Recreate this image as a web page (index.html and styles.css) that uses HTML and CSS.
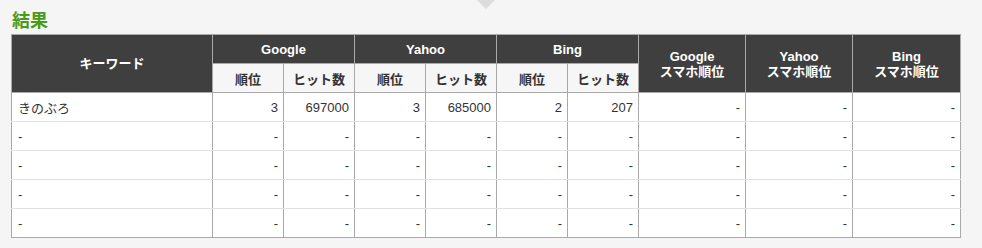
FILE: index.html
```html
<!DOCTYPE html>
<html lang="ja">
<head>
<meta charset="utf-8">
<link rel="stylesheet" href="styles.css">
</head>
<body>
<div class="page">
  <div class="notch"></div>
  <h2 class="title">結果</h2>
  <table class="result">
    <colgroup>
      <col class="c-kw">
      <col class="c-s"><col class="c-s">
      <col class="c-s"><col class="c-s">
      <col class="c-s"><col class="c-s">
      <col class="c-m"><col class="c-m"><col class="c-l">
    </colgroup>
    <thead>
      <tr class="h1">
        <th rowspan="2">キーワード</th>
        <th colspan="2">Google</th>
        <th colspan="2">Yahoo</th>
        <th colspan="2">Bing</th>
        <th rowspan="2">Google<br>スマホ順位</th>
        <th rowspan="2">Yahoo<br>スマホ順位</th>
        <th rowspan="2">Bing<br>スマホ順位</th>
      </tr>
      <tr class="h2">
        <th class="rank">順位</th><th>ヒット数</th>
        <th class="rank">順位</th><th>ヒット数</th>
        <th class="rank">順位</th><th>ヒット数</th>
      </tr>
    </thead>
    <tbody>
      <tr>
        <td class="kw">きのぶろ</td>
        <td class="rank">3</td><td>697000</td>
        <td class="rank">3</td><td>685000</td>
        <td class="rank">2</td><td>207</td>
        <td>-</td><td>-</td><td>-</td>
      </tr>
      <tr>
        <td class="kw">-</td>
        <td class="rank">-</td><td>-</td>
        <td class="rank">-</td><td>-</td>
        <td class="rank">-</td><td>-</td>
        <td>-</td><td>-</td><td>-</td>
      </tr>
      <tr>
        <td class="kw">-</td>
        <td class="rank">-</td><td>-</td>
        <td class="rank">-</td><td>-</td>
        <td class="rank">-</td><td>-</td>
        <td>-</td><td>-</td><td>-</td>
      </tr>
      <tr>
        <td class="kw">-</td>
        <td class="rank">-</td><td>-</td>
        <td class="rank">-</td><td>-</td>
        <td class="rank">-</td><td>-</td>
        <td>-</td><td>-</td><td>-</td>
      </tr>
      <tr>
        <td class="kw">-</td>
        <td class="rank">-</td><td>-</td>
        <td class="rank">-</td><td>-</td>
        <td class="rank">-</td><td>-</td>
        <td>-</td><td>-</td><td>-</td>
      </tr>
    </tbody>
  </table>
</div>
</body>
</html>
```
FILE: styles.css
```css
html, body {
  margin: 0;
  padding: 0;
  background: #f5f5f5;
}
body {
  width: 982px;
  height: 248px;
  overflow: hidden;
  font-family: "Liberation Sans", "Noto Sans CJK JP", Arial, sans-serif;
  color: #333;
}
.page {
  position: relative;
  padding: 0 0 0 11px;
}
.notch {
  position: absolute;
  left: 477px;
  top: 0;
  width: 0;
  height: 0;
  border-left: 9px solid transparent;
  border-right: 9px solid transparent;
  border-top: 9px solid #dcdcdc;
}
.title {
  margin: 0;
  padding: 7px 0 3px 1px;
  font-size: 18px;
  line-height: 24px;
  font-weight: bold;
  color: #4a9b1a;
  font-family: "Noto Sans CJK JP", sans-serif;
}
.result {
  border-collapse: collapse;
  table-layout: fixed;
  width: 950px;
  border: 1px solid #a9a9a9;
  background: #fff;
}
.c-kw { width: 201px; }
.c-s { width: 71px; }
.c-m { width: 107px; }
.c-l { width: 108px; }
.result th {
  font-weight: bold;
  font-size: 13px;
  text-align: center;
  padding: 0;
  border: 1px solid #a9a9a9;
}
.result .h1 th {
  background: #3f3f3f;
  color: #fff;
  height: 28px;
  line-height: 15px;
}
.result .h2 th {
  background: #f6f6f6;
  color: #333;
  height: 28px;
}
.result .h2 th.rank {
  border-right: 1px dotted #a9a9a9;
}
.result td {
  height: 28px;
  padding: 0 5px 0 6px;
  font-size: 13px;
  text-align: right;
  color: #333;
  border-left: 1px solid #a9a9a9;
  border-right: 1px solid #a9a9a9;
  border-bottom: 1px solid #e2e2e2;
}
.result td.kw {
  text-align: left;
}
.result td.rank {
  border-right: 1px dotted #a9a9a9;
}
.result tbody tr:last-child td {
  border-bottom: 1px solid #a9a9a9;
}
```
